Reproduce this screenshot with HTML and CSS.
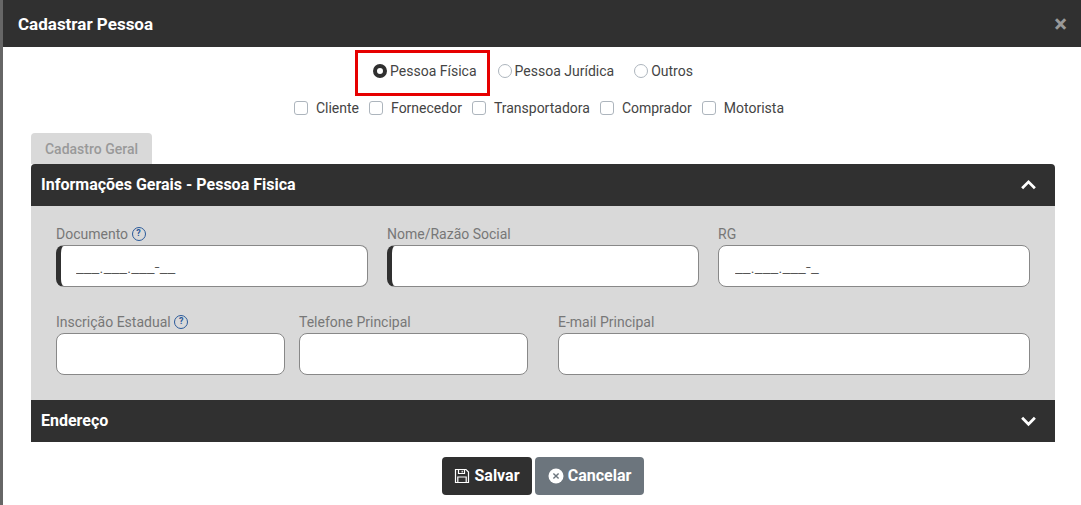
FILE: index.html
```html
<!DOCTYPE html>
<html lang="pt-BR">
<head>
    <meta charset="utf-8" />
    <title>Cadastrar Pessoa</title>
    <link rel="stylesheet" href="styles.css">
</head>
<body>

  <div class="modal">
    <div class="modal-header">
      <h4>Cadastrar Pessoa</h4>
      <span class="close">&times;</span>
    </div>

    <div class="tipo-row">
      <label class="radio-item destaque"><span class="radio on"></span>Pessoa Física</label>
      <label class="radio-item"><span class="radio"></span>Pessoa Jurídica</label>
      <label class="radio-item"><span class="radio"></span>Outros</label>
    </div>

    <div class="perfil-row">
      <label class="check-item"><span class="check"></span>Cliente</label>
      <label class="check-item"><span class="check"></span>Fornecedor</label>
      <label class="check-item"><span class="check"></span>Transportadora</label>
      <label class="check-item"><span class="check"></span>Comprador</label>
      <label class="check-item"><span class="check"></span>Motorista</label>
    </div>

    <div class="tabs"><span class="tab">Cadastro Geral</span></div>

    <div class="painel">
      <div class="painel-header topo">
        <span>Informações Gerais - Pessoa Fisica</span>
        <svg class="chevron" viewBox="0 0 16 12"><path d="M2 9.5 8 3.5l6 6" /></svg>
      </div>

      <div class="painel-body">
        <div class="linha linha-1">
          <div class="campo">
            <label>Documento <span class="ajuda">?</span></label>
            <input class="obrigatorio mascara" type="text" value="___.___.___-__" />
          </div>
          <div class="campo">
            <label>Nome/Razão Social</label>
            <input class="obrigatorio" type="text" />
          </div>
          <div class="campo">
            <label>RG</label>
            <input class="mascara" type="text" value="__.___.___-_" />
          </div>
        </div>
        <div class="linha linha-2">
          <div class="campo">
            <label>Inscrição Estadual <span class="ajuda">?</span></label>
            <input type="text" />
          </div>
          <div class="campo">
            <label>Telefone Principal</label>
            <input type="text" />
          </div>
          <div class="campo email">
            <label>E-mail Principal</label>
            <input type="text" />
          </div>
        </div>
      </div>

      <div class="painel-header">
        <span>Endereço</span>
        <svg class="chevron" viewBox="0 0 16 12"><path d="M2 3.5l6 6 6-6" /></svg>
      </div>
    </div>

    <div class="acoes">
      <button class="btn salvar">
        <svg viewBox="0 0 16 16"><path d="M1.5 1.5h10.5l2.5 2.5v10.5h-13z M4.5 1.5v4h6v-4 M8.2 2.8v1.6 M3.8 14.5v-5.5h8.4v5.5" /></svg>
        Salvar
      </button>
      <button class="btn cancelar">
        <svg viewBox="0 0 16 16"><circle class="disco" cx="8" cy="8" r="7.5" /><path class="xis" d="M5.4 5.4l5.2 5.2M10.6 5.4l-5.2 5.2" /></svg>
        Cancelar
      </button>
    </div>
  </div>

</body>
</html>
```

FILE: styles.css
```css
* { box-sizing: border-box; }
html, body { height: 100%; }
body {
    margin: 0;
    background-color: #666;
    font-family: Roboto, Arial, sans-serif;
    overflow: hidden;
}
.modal {
    margin-left: 3px;
    height: 505px;
    background-color: #fff;
}
.modal-header {
    height: 47px;
    background-color: #303030;
    color: #fff;
    display: flex;
    justify-content: space-between;
    align-items: center;
    padding: 0 14px 0 15px;
}
.modal-header h4 { margin: 0; font-size: 17px; font-weight: 700; }
.close { color: #999; font-size: 24px; font-weight: 700; line-height: 1; margin-top: 1px; }

/* tipo de pessoa */
.tipo-row {
    height: 46px;
    margin-top: 3px;
    display: flex;
    justify-content: center;
    padding-right: 36px;
}
.radio-item {
    display: flex;
    align-items: center;
    font-size: 14px;
    color: #444;
    padding-right: 20px;
    padding-bottom: 4px;
}
.radio-item:last-child { padding-right: 0; }
.destaque {
    border: 3px solid #e60000;
    padding: 0 10px 4px 15px;
    margin-right: 8px;
}
.radio {
    width: 14px; height: 14px;
    border: 1px solid #adb5bd;
    border-radius: 50%;
    margin-right: 3px;
    background-color: #fff;
}
.radio.on { border: 4px solid #303030; }

/* perfis */
.perfil-row {
    height: 24px;
    display: flex;
    justify-content: center;
    align-items: center;
    gap: 10px;
    padding-right: 6px;
}
.check-item { display: flex; align-items: center; font-size: 14px; color: #444; }
.check {
    width: 14px; height: 14px;
    border: 1px solid #adb5bd;
    border-radius: 3px;
    margin-right: 8px;
    background-color: #fff;
}

.tabs { margin: 13px 26px 0 28px; height: 31px; }
.tab {
    display: inline-block;
    width: 121px; height: 31px;
    line-height: 32px;
    text-align: center;
    font-size: 14px;
    font-weight: 500;
    color: #999;
    background-color: #d9d9d9;
    border-radius: 4px 4px 0 0;
}

.painel { margin: 0 26px 0 28px; }
.painel-header {
    height: 42px;
    background-color: #303030;
    color: #fff;
    font-size: 16px;
    font-weight: 700;
    display: flex;
    justify-content: space-between;
    align-items: center;
    padding: 0 18.5px 2px 10px;
}
.painel-header.topo { border-radius: 4px 4px 0 0; }
.chevron { width: 17px; height: 13px; fill: none; stroke: #fff; stroke-width: 2.6; }

.painel-body {
    height: 194px;
    background-color: #d9d9d9;
    padding: 18px 25px 0 25px;
}
.linha { display: grid; }
.linha-1 { grid-template-columns: repeat(3, 312px); column-gap: 19px; margin-bottom: 25px; }
.linha-2 { grid-template-columns: 229px 229px 1fr; column-gap: 14px; }
.email { margin-left: 16px; }
.campo label {
    display: flex;
    align-items: center;
    gap: 3.5px;
    height: 21px;
    padding-bottom: 1px;
    font-size: 14px;
    color: #777;
}
.campo input {
    display: block;
    width: 100%;
    height: 42px;
    border: 1px solid #888;
    border-radius: 8px;
    background-color: #fff;
    padding: 0 16px;
    font-family: Roboto, Arial, sans-serif;
    font-size: 14px;
    color: #555;
}
.campo input.obrigatorio { border-left: 5px solid #303030; padding-left: 15px; }
.campo input.mascara { font-size: 18px; font-weight: 300; }
.ajuda {
    width: 14px; height: 14px;
    border: 1.5px solid #2a5a9a;
    border-radius: 50%;
    color: #2a5a9a;
    font-size: 9px;
    font-weight: 700;
    line-height: 11px;
    text-align: center;
}

.acoes { display: flex; justify-content: center; gap: 3px; margin-top: 15px; padding-left: 2px; }
.btn {
    height: 38px;
    border: none;
    border-radius: 4px;
    color: #fff;
    font-family: Roboto, Arial, sans-serif;
    font-size: 16px;
    font-weight: 700;
    display: flex;
    align-items: center;
    justify-content: center;
    gap: 4px;
    padding: 0 0 2px;
}
.btn svg { width: 16px; height: 16px; margin-top: 2px; }
.salvar { background-color: #303030; width: 90px; }
.salvar svg { fill: none; stroke: #fff; stroke-width: 1.2; }
.cancelar { background-color: #6c757d; width: 109px; }
.disco { fill: #fff; }
.xis { fill: none; stroke: #6c757d; stroke-width: 1.4; }
```
